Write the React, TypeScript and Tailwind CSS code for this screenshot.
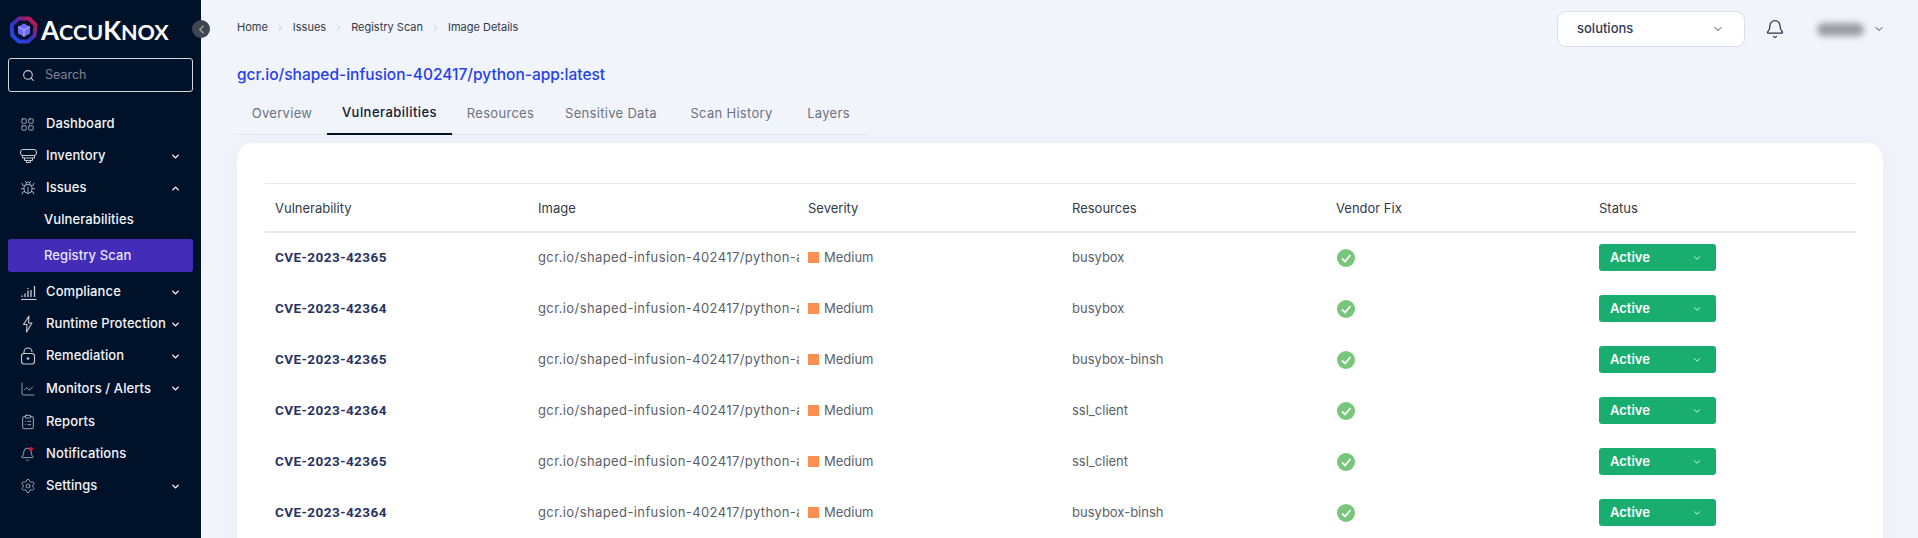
import type { ReactNode } from "react";
import {
  Bell,
  Bug,
  ChartLine,
  ChevronDown,
  ChevronLeft,
  ChevronRight,
  ChevronUp,
  ClipboardList,
  LayoutGrid,
  Search,
  Settings,
} from "lucide-react";

const rows = [
  { cve: "CVE-2023-42365", resource: "busybox" },
  { cve: "CVE-2023-42364", resource: "busybox" },
  { cve: "CVE-2023-42365", resource: "busybox-binsh" },
  { cve: "CVE-2023-42364", resource: "ssl_client" },
  { cve: "CVE-2023-42365", resource: "ssl_client" },
  { cve: "CVE-2023-42364", resource: "busybox-binsh" },
];

const tabs = [
  { label: "Overview", width: "w-[90px]" },
  { label: "Vulnerabilities", width: "w-[125px]" },
  { label: "Resources", width: "w-[97px]" },
  { label: "Sensitive Data", width: "w-[124px]" },
  { label: "Scan History", width: "w-[117px]" },
  { label: "Layers", width: "w-[77px]" },
];
const crumbs = ["Home", "Issues", "Registry Scan", "Image Details"];
const gridCols = "grid grid-cols-[263px_270px_264px_264px_263px_1fr]";

function Logo() {
  return (
    <svg width="28" height="28" viewBox="0 0 28 28" className="shrink-0">
      <defs>
        <linearGradient id="ring" x1="0" y1="1" x2="1" y2="0">
          <stop offset="0" stopColor="#1d4ff5" />
          <stop offset="0.5" stopColor="#3a2fb8" />
          <stop offset="1" stopColor="#e0103a" />
        </linearGradient>
      </defs>
      <path d="M9 2.500h10l6.500 6.500-1 10.500-6.500 6h-9l-6.500-6-1-10.500z" fill="none" stroke="url(#ring)" strokeWidth="4" strokeLinejoin="round" />
      <path d="M14 7.500l6 3.300v6.700l-6 3.300-6-3.300v-6.700z" fill="#6f6cf6" />
      <path d="M8 10.800l6 3.300 6-3.300M14 14.100v7" fill="none" stroke="#c9c8ff" strokeWidth="0.8" />
    </svg>
  );
}

function InventoryIcon() {
  return (
    <svg width="17" height="17" viewBox="0 0 17 17" fill="none" stroke="currentColor" strokeWidth="1" className="shrink-0">
      <rect x="0.500" y="1.500" width="16" height="6" rx="2.500" />
      <path d="M2.500 7.500v2.500h12V7.500M4.500 10v2.500h8V10M6.500 12.500v2h4v-2" />
    </svg>
  );
}

function ComplianceIcon() {
  return (
    <svg width="17" height="17" viewBox="0 0 17 17" fill="none" stroke="currentColor" strokeWidth="1.100" className="shrink-0">
      <path d="M1 15.500h15.500" />
      <path d="M2 13v-1.500M5 13V9.500M8 13V6.500M8 5V4M11 13V6M14.500 13V2" strokeWidth="1.300" />
    </svg>
  );
}

function BoltIcon() {
  return (
    <svg width="16" height="18" viewBox="0 0 16 18" fill="none" stroke="currentColor" strokeWidth="1.100" strokeLinejoin="round" className="shrink-0">
      <path d="M9 1L3.500 9.500H7L6.500 17l5.500-9H8.500z" />
    </svg>
  );
}

function LockIcon() {
  return (
    <svg width="16" height="18" viewBox="0 0 16 18" fill="none" stroke="currentColor" strokeWidth="1.100" className="shrink-0">
      <rect x="1.500" y="6.500" width="13" height="10.500" rx="2.500" />
      <path d="M4 6.500V5a4 4 0 0 1 8 0" />
      <circle cx="8" cy="11.500" r="1.300" fill="currentColor" stroke="none" />
    </svg>
  );
}

function NavRow({
  icon,
  label,
  open,
  chevron = true,
  className = "h-8",
}: {
  icon: ReactNode;
  label: string;
  open?: boolean;
  chevron?: boolean;
  className?: string;
}) {
  return (
    <div className={`flex items-center pl-5 pr-[20px] text-white ${className}`}>
      <span className="flex w-[26px] shrink-0 text-[#c9cdd4]">{icon}</span>
      <span className="flex-1 whitespace-nowrap text-[13px] font-medium tracking-[0.1px] text-[#f4f6fb]">{label}</span>
      {chevron && (open ? <ChevronUp size={11} strokeWidth={3} /> : <ChevronDown size={11} strokeWidth={3} />)}
    </div>
  );
}

function Sidebar() {
  return (
    <aside className="relative flex w-[201px] shrink-0 flex-col bg-[#00112a]">
      <div className="flex h-[58px] items-start gap-[3px] pl-[10px] pt-[16px]">
        <Logo />
        <div className="pt-[1px] whitespace-nowrap font-['Lato',sans-serif] font-bold leading-[26px] text-white">
          <span className="text-[26px]">A</span>
          <span className="text-[21.500px]">CCU</span>
          <span className="text-[26px]">K</span>
          <span className="text-[21.500px]">NOX</span>
        </div>
      </div>
      <button className="absolute left-[192px] top-[20px] flex h-[18px] w-[18px] items-center justify-center rounded-full bg-[#3f4650] text-[#9aa0a8]">
        <ChevronLeft size={13} strokeWidth={3} />
      </button>
      <div className="mx-2 flex h-[34px] items-center gap-[10px] rounded-[3px] border border-[#d5d8dc] pl-[13px] text-[12.500px] text-[#7d8694]">
        <Search size={13} className="text-[#c9cdd4]" />
        Search
      </div>
      <div className="mt-[16px] flex flex-col">
        <NavRow icon={<LayoutGrid size={15} strokeWidth={1.200} />} label="Dashboard" chevron={false} />
        <NavRow icon={<InventoryIcon />} label="Inventory" />
        <NavRow icon={<Bug size={16} strokeWidth={1.200} />} label="Issues" open />
        <div className="flex h-[32px] items-center pl-[44px] text-[13px] font-medium tracking-[0.1px] text-[#f4f6fb]">Vulnerabilities</div>
        <div className="mx-2 mt-[3px] flex h-[33px] items-center rounded-[3px] bg-[#432db8] pl-[36px] text-[13px] font-medium tracking-[0.1px] text-[#e9e7fb]">
          Registry Scan
        </div>
        <NavRow icon={<ComplianceIcon />} label="Compliance" className="mt-[4px] h-8" />
        <NavRow icon={<BoltIcon />} label="Runtime Protection" />
        <NavRow icon={<LockIcon />} label="Remediation" />
        <NavRow icon={<ChartLine size={16} strokeWidth={1.100} />} label="Monitors / Alerts" className="h-[33px]" />
        <NavRow icon={<ClipboardList size={16} strokeWidth={1.200} />} label="Reports" chevron={false} className="h-[33px]" />
        <NavRow
          icon={
            <span className="relative flex">
              <Bell size={15} strokeWidth={1.200} />
              <span className="absolute left-[9px] top-0 h-1 w-1 rounded-full bg-[#e0102a]" />
            </span>
          }
          label="Notifications"
          chevron={false}
        />
        <NavRow icon={<Settings size={16} strokeWidth={1.100} />} label="Settings" />
      </div>
    </aside>
  );
}

function Header() {
  return (
    <div className="flex h-[66px] items-start justify-between">
      <div className="flex items-center gap-[7px] pl-[16px] pt-[19px] text-[11px] text-[#333a49]">
        {crumbs.map((crumb, i) => (
          <span key={crumb} className="flex items-center gap-[7px]">
            {i > 0 && <ChevronRight size={11} strokeWidth={1} className="text-[#8a90a0]" />}
            {crumb}
          </span>
        ))}
      </div>
      <div className="flex items-center pt-[11px]">
        <div className="flex h-[36px] w-[188px] items-center justify-between rounded-[9px] border border-[#d9deea] bg-white pl-[19px] pr-[20px] text-[13px] font-medium text-[#2f3a55]">
          solutions
          <ChevronDown size={12} className="text-[#3c4560]" />
        </div>
        <Bell size={20} strokeWidth={1.500} className="ml-[20px] text-[#2a3553]" />
        <div className="ml-[32px] h-[13px] w-[47px] rounded-full bg-[#9a9ba2] blur-[3px]" />
        <ChevronDown size={12} className="ml-[9px] mr-[33px] text-[#3c4560]" />
      </div>
    </div>
  );
}

function Tabs() {
  return (
    <div className="ml-[16px] mt-[9px] flex h-[42px] w-[631px] border-b border-[#e3e6ee]">
      {tabs.map((tab) => (
        <div
          key={tab.label}
          className={
            tab.label === "Vulnerabilities"
              ? `-mb-px flex items-center justify-center whitespace-nowrap border-b-2 border-[#00112a] text-[13px] font-medium tracking-[0.45px] text-[#101a33] ${tab.width}`
              : `flex items-center justify-center whitespace-nowrap text-[13px] tracking-[0.3px] text-[#6e7280] ${tab.width}`
          }
        >
          {tab.label}
        </div>
      ))}
    </div>
  );
}

function CheckIcon() {
  return (
    <svg width="18" height="18" viewBox="0 0 18 18">
      <circle cx="9" cy="9" r="9" fill="#77c67b" />
      <path d="M5 9.500l3 3 5.500-6.500" fill="none" stroke="#fff" strokeWidth="1.800" />
    </svg>
  );
}

function Row({ cve, resource }: { cve: string; resource: string }) {
  return (
    <div className={`${gridCols} h-[51px] items-center px-[10px] text-[13px] text-[#5b5f69]`}>
      <div className="font-['Roboto',sans-serif] text-[13.500px] font-bold tracking-[0.45px] text-[#28345f]">{cve}</div>
      <div className="w-[261px] overflow-hidden whitespace-nowrap tracking-[0.4px]">gcr.io/shaped-infusion-402417/python-app:latest</div>
      <div className="flex items-center gap-[5px]">
        <span className="h-[11px] w-[11px] bg-[#ff8f50]" />
        Medium
      </div>
      <div>{resource}</div>
      <div className="pl-px">
        <CheckIcon />
      </div>
      <div className="flex h-[27px] w-[117px] items-center justify-between rounded-[3px] bg-[#19ae6f] pl-[11px] pr-[14px] text-[13px] font-semibold text-white">
        Active
        <ChevronDown size={10} strokeWidth={2} />
      </div>
    </div>
  );
}

function VulnTable() {
  return (
    <div className="mx-[28px] mt-[39px] border-t border-[#e6e6f5]">
      <div className={`${gridCols} h-[49px] items-center border-b-2 border-[#e6e6f5] px-[10px] pt-[2px] text-[13px] text-[#343a46]`}>
        <div>Vulnerability</div>
        <div>Image</div>
        <div>Severity</div>
        <div>Resources</div>
        <div>Vendor Fix</div>
        <div>Status</div>
      </div>
      <div className="-mt-px">
        {rows.map((row, i) => (
          <Row key={i} {...row} />
        ))}
      </div>
    </div>
  );
}

export default function App() {
  return (
    <div className="flex h-[538px] w-[1918px] overflow-hidden bg-[#f1f4fa] font-['Inter',sans-serif]">
      <Sidebar />
      <main className="min-w-0 flex-1 pl-[20px]">
        <Header />
        <div className="pl-[16px] text-[15.500px] font-medium leading-[18px] text-[#2541e8]">
          gcr.io/shaped-infusion-402417/python-app:latest
        </div>
        <Tabs />
        <div className="ml-[16px] mr-[35px] mt-[8px] h-[420px] rounded-[16px] bg-white pt-px shadow-[0_0_12px_rgba(225,230,242,0.5)]">
          <VulnTable />
        </div>
      </main>
    </div>
  );
}
